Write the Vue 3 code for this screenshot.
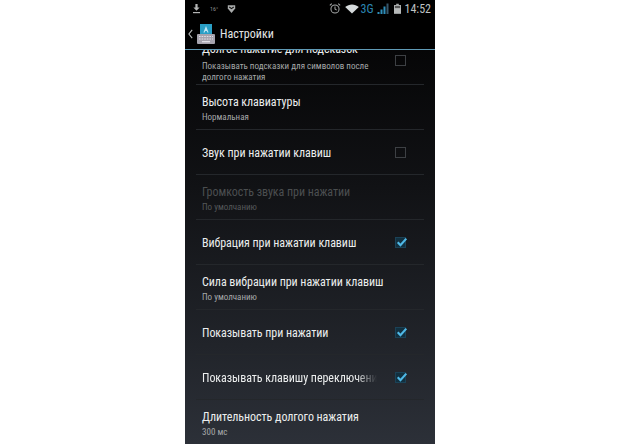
<script setup>
const rows = [
  { title: 'Долгое нажатие для подсказок', sub: 'Показывать подсказки для символов после долгого нажатия', box: 'off', first: true },
  { title: 'Высота клавиатуры', sub: 'Нормальная' },
  { title: 'Звук при нажатии клавиш', box: 'off' },
  { title: 'Громкость звука при нажатии', sub: 'По умолчанию', disabled: true },
  { title: 'Вибрация при нажатии клавиш', box: 'on' },
  { title: 'Сила вибрации при нажатии клавиш', sub: 'По умолчанию' },
  { title: 'Показывать при нажатии', box: 'on' },
  { title: 'Показывать клавишу переключения', box: 'on', fade: true },
  { title: 'Длительность долгого нажатия', sub: '300 мс' }
]
</script>

<template>
  <div class="page">
    <div class="phone">
      <div class="status">
        <div class="status-left">
          <svg class="ic" width="9" height="11" viewBox="0 0 9 11"><path d="M3.4 1h2.2v3.6h2L4.5 7.8 1.4 4.6h2z" fill="#b4b6b6"/><rect x="1" y="9" width="7" height="1.2" fill="#b4b6b6"/></svg>
          <span class="temp">16°</span>
          <svg class="ic" width="9" height="10" viewBox="0 0 9 10"><path d="M.8 1.2h7.4v3.4L4.5 9 .8 4.6z" fill="#a9abab"/><path d="M2.3 3l2.2 1.6L6.7 3" stroke="#111" stroke-width="1.1" fill="none"/></svg>
        </div>
        <div class="status-right">
          <svg class="ic" width="12" height="13" viewBox="0 0 13 13"><circle cx="6.5" cy="7" r="4.4" fill="none" stroke="#a5a8a8" stroke-width="1.1"/><path d="M6.5 4.4V7l1.8 1.2M.9 3.2 3 1.2M12.1 3.2 10 1.2" stroke="#a5a8a8" stroke-width="1.1" fill="none"/></svg>
          <svg class="ic wifi" width="14" height="10" viewBox="0 0 15 11"><path d="M7.5 10.5 0 3.4C4.4-.4 10.6-.4 15 3.4z" fill="#d5dadb"/></svg>
          <span class="net">3G</span>
          <svg class="ic signal" width="12" height="12" viewBox="0 0 11 12"><rect x="0" y="9" width="2" height="2" fill="#2f8fbb"/><rect x="3" y="6.5" width="2" height="4.5" fill="#2f8fbb"/><rect x="6" y="3.5" width="2" height="7.5" fill="#2f8fbb"/><rect x="9" y="0.5" width="2" height="10.5" fill="#37566a"/></svg>
          <svg class="ic batt" width="7" height="12" viewBox="0 0 8 12"><rect x="2.5" y="0" width="3" height="1.5" fill="#a5a8a8"/><rect x="0" y="1.5" width="8" height="10" fill="#b6b9b9"/><rect x="1" y="2.5" width="6" height="2.5" fill="#555"/></svg>
          <span class="time">14:52</span>
        </div>
      </div>
      <div class="bar">
        <svg class="back" width="5" height="10" viewBox="0 0 5 10"><path d="M4.2.8.9 5l3.3 4.2" fill="none" stroke="#b9bcbc" stroke-width="1.1"/></svg>
        <svg class="logo" width="18" height="20" viewBox="0 0 18 20">
          <rect x="3" y="0" width="12" height="11" fill="#2a9fc6"/>
          <path d="M9 2 6.4 8.5h1.3l.5-1.4h1.6l.5 1.4h1.3L9 2z" fill="#bfe6f3"/>
          <rect x="0" y="10" width="18" height="10" rx="1" fill="#a6a3ad"/>
          <path d="M2 12.5h14M2 15h14" stroke="#e1dfe6" stroke-width="1.1" stroke-dasharray="1.6 1"/>
          <rect x="5" y="17" width="8" height="1.3" fill="#e1dfe6"/>
        </svg>
        <span class="bar-title">Настройки</span>
      </div>
      <div class="list">
        <div v-for="r in rows" :key="r.title" class="row" :class="{ first: r.first, disabled: r.disabled }">
          <div class="text" :class="{ fade: r.fade }">
            <div class="title">{{ r.title }}</div>
            <div v-if="r.sub" class="sub">{{ r.sub }}</div>
          </div>
          <div v-if="r.box" class="box" :class="r.box">
            <svg v-if="r.box === 'on'" class="tick" width="12" height="10" viewBox="0 0 13 11"><path d="M1.8 5.8 4.8 9l6.4-7.2" fill="none" stroke="#4fb8e6" stroke-width="2.4"/></svg>
          </div>
        </div>
      </div>
    </div>
  </div>
</template>

<style scoped>
.page {
  width: 620px;
  height: 444px;
  background: #fff;
  display: flex;
  justify-content: center;
  overflow: hidden;
  font-family: Roboto, "Liberation Sans", sans-serif;
  font-stretch: 84%;
}
.phone {
  width: 250px;
  height: 444px;
  display: flex;
  flex-direction: column;
  background: #000;
}
.status {
  height: 17px;
  flex: none;
  display: flex;
  justify-content: space-between;
  align-items: center;
  padding: 0 4px 0 7px;
}
.status-left {
  display: flex;
  align-items: center;
  gap: 9px;
}
.status-right {
  display: flex;
  align-items: center;
}
.ic { display: block; flex: none; }
.temp {
  font-size: 6px;
  color: #8f9292;
  width: 8px;
}
.wifi { margin-left: 4px; }
.net {
  font-size: 12px;
  color: #2b86b2;
  margin-left: 1px;
}
.signal { margin-left: 3px; }
.batt { margin-left: 5px; }
.time {
  font-size: 12px;
  color: #bfc2c2;
  margin-left: 4px;
}
.bar {
  height: 32px;
  flex: none;
  display: flex;
  align-items: center;
  padding: 2px 0 0 3px;
  box-sizing: border-box;
}
.logo { margin-left: 4px; }
.bar-title {
  font-size: 12px;
  color: #e4e6e6;
  margin-left: 5px;
}
.list {
  flex: 1;
  min-height: 0;
  overflow: hidden;
  border-top: 1px solid #5f9ab5;
  background: linear-gradient(#060607, #111215 35%, #21242a 75%, #2c3038);
  display: flex;
  flex-direction: column;
}
.row {
  height: 45px;
  flex: none;
  margin: 0 11px;
  padding: 0 6px;
  box-sizing: border-box;
  border-bottom: 1px solid #24272b;
  display: flex;
  align-items: center;
  justify-content: space-between;
}
.row.first {
  margin-top: -10px;
}
.first .box {
  margin-bottom: 3px;
}
.first .title {
  margin-top: -3px;
}
.first .sub {
  margin-top: 4px;
}
.text {
  min-width: 0;
  flex: 1;
  padding-top: 3px;
}
.fade {
  max-width: 175px;
  overflow: hidden;
  -webkit-mask-image: linear-gradient(90deg, #000 88%, transparent);
  mask-image: linear-gradient(90deg, #000 88%, transparent);
}
.title {
  font-size: 12px;
  line-height: 15px;
  letter-spacing: -0.05px;
  color: #eceeee;
  white-space: nowrap;
}
.sub {
  font-size: 9px;
  line-height: 11px;
  margin-top: 2px;
  color: #a6a9aa;
  max-width: 180px;
}
.disabled .title { color: #4b4e50; }
.disabled .sub { color: #55585a; }
.box {
  width: 11px;
  height: 11px;
  flex: none;
  box-sizing: border-box;
  border: 1px solid #3d4044;
  margin-right: 12px;
  position: relative;
}
.box.on {
  background: #12303f;
  border-color: #1b4257;
}
.tick {
  position: absolute;
  left: 0;
  top: -1px;
}
</style>
